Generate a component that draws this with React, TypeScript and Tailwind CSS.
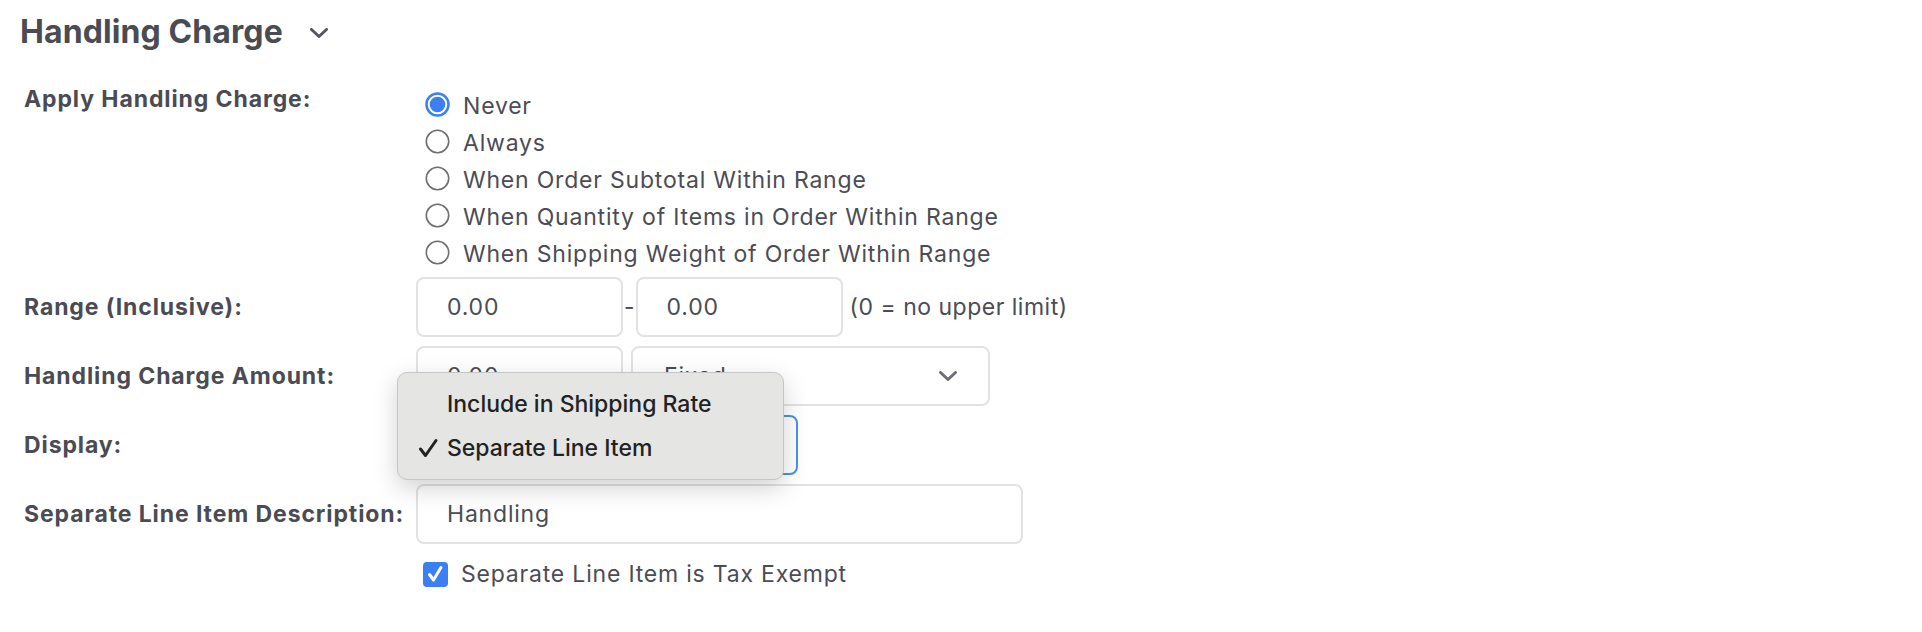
import { ReactNode } from "react";

const radios = [
  "Never",
  "Always",
  "When Order Subtotal Within Range",
  "When Quantity of Items in Order Within Range",
  "When Shipping Weight of Order Within Range",
];

function Radio({ checked }: { checked?: boolean }) {
  return checked ? (
    <svg width="25" height="25" viewBox="0 0 25 25" className="shrink-0">
      <circle cx="12.5" cy="12.5" r="11" fill="#fff" stroke="#3b7ff3" strokeWidth="2.5" />
      <circle cx="12.5" cy="12.5" r="7.8" fill="#3b7ff3" />
    </svg>
  ) : (
    <svg width="25" height="25" viewBox="0 0 25 25" className="shrink-0">
      <circle cx="12.5" cy="12.5" r="11.2" fill="#fff" stroke="#6f6f73" strokeWidth="1.6" />
    </svg>
  );
}

function Chevron({ color, className }: { color: string; className?: string }) {
  return (
    <svg width="20" height="10" viewBox="0 0 20 10" className={className}>
      <path d="M2.5 1.5 L10 8.5 L17.5 1.5" fill="none" stroke={color} strokeWidth="3" strokeLinecap="round" strokeLinejoin="round" />
    </svg>
  );
}

function Row({ label, children }: { label: string; children: ReactNode }) {
  return (
    <>
      <div className="flex items-center pl-1 font-bold text-[23px] tracking-[0.9px] text-[#4a4b53]">{label}</div>
      <div className="flex items-center">{children}</div>
    </>
  );
}

const inputCls =
  "h-[60px] rounded-[8px] border-2 border-[#e2e2e5] bg-white pl-[29px] flex items-center text-[23px] tracking-[0.8px] text-[#4b4c55]";

export default function App() {
  return (
    <div className="min-h-screen bg-white px-5 pt-3 font-['Inter',sans-serif] text-[#4b4c55]">
      {/* Header */}
      <h2 className="flex items-center gap-[26px] text-[32px] leading-[40px] font-bold tracking-[0.1px] text-[#4a4b53]">
        Handling Charge
        <Chevron color="#55575f" className="mt-[2px]" />
      </h2>

      <div className="mt-[34px] grid grid-cols-[396px_1fr] gap-y-[9px]">
        {/* Apply */}
        <div className="pl-1 font-bold text-[23px] leading-[26px] tracking-[0.9px] text-[#4a4b53]">Apply Handling Charge:</div>
        <div className="flex flex-col pl-[9px] mb-[-3px]">
          {radios.map((r, i) => (
            <label key={r} className="flex h-[37px] items-center gap-[13px] text-[23px] tracking-[0.8px]">
              <Radio checked={i === 0} />
              <span className="mt-[3px]">{r}</span>
            </label>
          ))}
        </div>

        <Row label="Range (Inclusive):">
          <div className={`${inputCls} w-[207px]`}>0.00</div>
          <span className="px-[1px] text-[23px]">-</span>
          <div className={`${inputCls} w-[207px]`}>0.00</div>
          <span className="ml-[7px] text-[23px] tracking-[0.5px]">(0 = no upper limit)</span>
        </Row>

        <Row label="Handling Charge Amount:">
          <div className={`${inputCls} w-[207px]`}>0.00</div>
          <div className={`${inputCls} ml-2 w-[359px] justify-between pl-[31px] pr-[30px]`}>
            Fixed
            <Chevron color="#6d6d73" />
          </div>
        </Row>

        <Row label="Display:">
          <div className="relative">
            <div className="h-[60px] w-[382px] rounded-[8px] border-2 border-[#4d8ef0] bg-white" />
            {/* open dropdown menu */}
            <div className="absolute -left-[19px] -top-[43px] w-[387px] rounded-[10px] border border-[#c6c6c6] bg-[#e5e5e3] pt-[9px] pb-[9px] shadow-[0_8px_24px_rgba(0,0,0,0.18)]">
              <div className="flex h-[44px] items-center pl-[49px] text-[23px] font-medium text-[#222]">Include in Shipping Rate</div>
              <div className="flex h-[44px] items-center text-[23px] font-medium text-[#222]">
                <svg width="49" height="20" viewBox="0 0 49 20" className="shrink-0">
                  <path d="M22.5 11 L27.5 17.5 L38 2.5" fill="none" stroke="#222" strokeWidth="3" strokeLinecap="round" strokeLinejoin="round" />
                </svg>
                Separate Line Item
              </div>
            </div>
          </div>
        </Row>

        <Row label="Separate Line Item Description:">
          <div className={`${inputCls} w-[607px]`}>Handling</div>
        </Row>

        <div />
        <label className="mt-[4px] flex items-center gap-[13px] pl-[7px] text-[23px] tracking-[0.8px]">
          <svg width="25" height="25" viewBox="0 0 25 25" className="shrink-0">
            <rect x="0" y="0" width="25" height="25" rx="4" fill="#3b7ff3" />
            <path d="M6.5 12.5 L10.5 18 L18 5.5" fill="none" stroke="#fff" strokeWidth="3" strokeLinecap="round" strokeLinejoin="round" />
          </svg>
          Separate Line Item is Tax Exempt
        </label>
      </div>
    </div>
  );
}
